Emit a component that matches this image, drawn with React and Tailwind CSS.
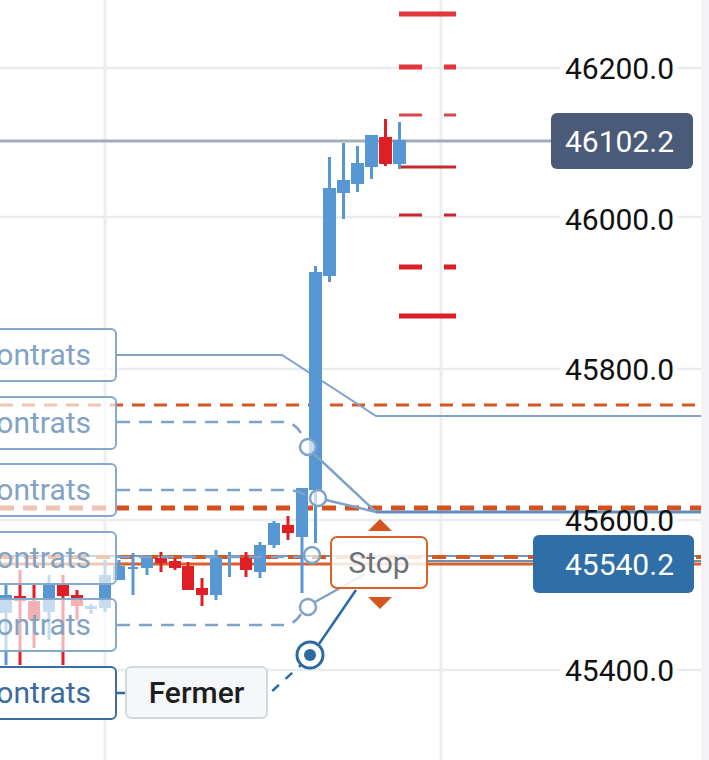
import React from "react";

const BLUE = "#5797d3";
const RED = "#de1f26";

// x, width, bodyTop, bodyBottom, wickTop, wickBottom, color
const candles = [
    [0, 12, 595, 613, 585, 665, "b"],
    [14, 12, 596, 601, 570, 665, "r"],
    [28, 12, 601, 620, 583, 648, "r"],
    [43, 12, 583, 612, 575, 640, "b"],
    [57, 12, 585, 596, 575, 665, "r"],
    [71, 12, 595, 606, 590, 620, "r"],
    [85, 12, 606, 609, 604, 614, "b"],
    [99, 12, 575, 608, 560, 612, "b"],
    [113, 12, 566, 580, 560, 580, "b"],
    [128, 10, 567, 569, 553, 595, "b"],
    [141, 12, 558, 568, 555, 575, "b"],
    [155, 12, 558, 563, 552, 572, "r"],
    [169, 12, 561, 568, 558, 570, "r"],
    [182, 12, 566, 590, 562, 590, "r"],
    [196, 12, 588, 595, 578, 606, "r"],
    [210, 12, 557, 595, 550, 600, "b"],
    [228, 3, 552, 577, 552, 577, "b"],
    [240, 12, 558, 570, 552, 577, "r"],
    [254, 12, 545, 572, 542, 578, "b"],
    [268, 12, 523, 545, 521, 548, "b"],
    [282, 12, 525, 533, 516, 540, "r"],
    [296, 12, 488, 537, 488, 593, "b"],
    [309, 13, 272, 490, 266, 543, "b"],
    [323, 13, 188, 276, 157, 282, "b"],
    [337, 13, 180, 193, 143, 219, "b"],
    [351, 13, 163, 184, 146, 192, "b"],
    [365, 13, 135, 167, 135, 179, "b"],
    [379, 13, 137, 164, 119, 166, "r"],
    [393, 13, 140, 164, 122, 169, "b"],
];

// y, thickness, solid, color
const redLevels = [
    [14, 5, true, "#e0363c"],
    [67, 5, false, "#e0363c"],
    [115, 3, false, "#d9474c"],
    [167, 3, true, "#c8262c"],
    [215, 3, false, "#c8262c"],
    [267, 5, false, "#dc1f26"],
    [316, 5, true, "#dc1f26"],
];

const gridY = [68, 217, 369, 520, 670];

const prices = ["46200.0", "46000.0", "45800.0", "45600.0", "45400.0"];

const Candle = ({ c }) => {
    const [x, w, bt, bb, wt, wb, col] = c;
    const fill = col === "r" ? RED : BLUE;
    return (
        <g fill={fill}>
            <rect x={x + w / 2 - 1.5} y={wt} width={3} height={wb - wt} />
            <rect x={x} y={bt} width={w} height={Math.max(bb - bt, 2)} />
        </g>
    );
};

const BaseLayer = () => (
    <svg className="absolute inset-0" width="701" height="760">
        {/* grid */}
        <line x1="105" y1="0" x2="105" y2="760" stroke="#eceef2" strokeWidth="3" />
        <line x1="441" y1="0" x2="441" y2="760" stroke="#eceef2" strokeWidth="3" />
        {gridY.map(y => (
            <g key={y} stroke="#eaecf0" strokeWidth="2.5">
                <line x1="0" y1={y} x2="560" y2={y} />
                <line x1="677" y1={y} x2="701" y2={y} />
            </g>
        ))}

        {/* last price line */}
        <line x1="0" y1="141" x2="552" y2="141" stroke="#a4acb9" strokeWidth="3" />

        {/* red levels */}
        {redLevels.map(([y, t, solid, color]) =>
            solid ? (
                <rect key={y} x="399" y={y - t / 2} width="57" height={t} fill={color} />
            ) : (
                <g key={y} fill={color}>
                    <rect x="399" y={y - t / 2} width="23" height={t} />
                    <rect x="444" y={y - t / 2} width="12" height={t} />
                </g>
            )
        )}

        {/* orange order lines */}
        <line x1="0" y1="405" x2="701" y2="405" stroke="#d4581f" strokeWidth="3" strokeDasharray="13 9" />
        <line x1="0" y1="508" x2="701" y2="508" stroke="#d4501c" strokeWidth="5" strokeDasharray="14 9" />
        <line x1="0" y1="556" x2="701" y2="556" stroke="#6e9bc8" strokeWidth="2" />
        <line x1="428" y1="561" x2="701" y2="561" stroke="#6b8fb5" strokeWidth="2" />
        <line x1="0" y1="557" x2="701" y2="557" stroke="#d4581f" strokeWidth="4" strokeDasharray="14 10" />
        <line x1="0" y1="564" x2="701" y2="564" stroke="#d9612c" strokeWidth="3" />

        {/* blue position lines */}
        <polyline points="117,355 282,355 376,416 701,416" fill="none" stroke="#7fa3c8" strokeWidth="2" />
        <line x1="376" y1="512" x2="701" y2="512" stroke="#5e8fc0" strokeWidth="3" />

        {candles.map((c, i) => (
            <Candle key={i} c={c} />
        ))}
    </svg>
);

const TopLayer = () => (
    <svg className="absolute inset-0" width="701" height="760">
        <g fill="none" stroke="#7fa3c8" strokeWidth="2.5" strokeDasharray="13 9">
            <path d="M117 422 H284 Q294 422 301 433" />
            <path d="M117 490 H286 Q296 490 306 495" />
            <path d="M117 557 H300" />
            <path d="M117 625 H284 Q294 625 301 614" />
        </g>
        <g fill="none" stroke="#7fa3c8" strokeWidth="2.5">
            <line x1="313" y1="453" x2="376" y2="512" />
            <line x1="326" y1="500" x2="376" y2="512" />
            <line x1="315" y1="602" x2="365" y2="574" />
        </g>
        <g fill="#ffffff" fillOpacity="0.65" stroke="#7fa3c8" strokeWidth="2.5">
            <circle cx="308" cy="447" r="8" />
            <circle cx="318" cy="498" r="8" />
            <circle cx="312" cy="555" r="8" />
            <circle cx="308" cy="607" r="8" />
        </g>

        {/* main position target */}
        <line x1="319" y1="644" x2="356" y2="590" stroke="#2b6aa3" strokeWidth="2.5" />
        <line x1="270" y1="693" x2="302" y2="664" stroke="#2b6aa3" strokeWidth="2.5" strokeDasharray="0 3 9 6" />
        <line x1="117" y1="693" x2="126" y2="693" stroke="#2b6aa3" strokeWidth="2.5" />
        <circle cx="310" cy="655" r="13" fill="#ffffff" stroke="#2b6aa3" strokeWidth="3" />
        <circle cx="310" cy="655" r="6" fill="#2b6aa3" />

        {/* stop arrows */}
        <polygon points="368,531 392,531 380,519" fill="#d5541f" />
        <polygon points="368,597 392,597 380,609" fill="#d5541f" />
    </svg>
);

const ContractBox = ({ active }) => (
    <div
        className={`w-[157px] h-[54px] shrink-0 rounded-[6px] border-2 flex items-center justify-end pr-[24px] text-[30px] leading-none ${
            active
                ? "border-[#3a6c9f] bg-white text-[#3a6b9c]"
                : "border-[#86a8ca] bg-white/65 text-[#82a3c5]"
        }`}
    >
        Contrats
    </div>
);

export default function App() {
    return (
        <div className="flex w-[709px] h-[760px] overflow-hidden bg-white font-['Roboto',_'Liberation_Sans',_sans-serif]">
            <div className="relative flex-1">
                <BaseLayer />
                <TopLayer />

                {/* position labels, stacked on the left edge */}
                <div className="absolute left-[-40px] top-[328px] flex flex-col gap-[13.6px]">
                    <ContractBox />
                    <ContractBox />
                    <ContractBox />
                    <ContractBox />
                    <ContractBox />
                    <div className="flex items-center gap-[8px]">
                        <ContractBox active />
                        <button className="w-[143px] h-[53px] rounded-[6px] border-2 border-[#d3d8dd] bg-[#f5f7f9] flex items-center justify-center text-[30px] font-medium text-[#1e1e1e]">
                            Fermer
                        </button>
                    </div>
                </div>

                <div className="absolute left-[330px] top-[536px] w-[98px] h-[53px] rounded-[7px] border-2 border-[#d9622b] bg-white/85 flex items-center justify-center text-[30px] text-[#6c7079]">
                    Stop
                </div>

                {/* price axis */}
                <div className="absolute right-[27px] top-[51px] flex flex-col items-end gap-[115.5px]">
                    {prices.map(p => (
                        <div key={p} className="text-[30px] leading-[35px] text-[#111]">
                            {p}
                        </div>
                    ))}
                </div>

                <div className="absolute left-[551px] top-[113px] w-[142px] h-[56px] rounded-[6px] bg-[#4a5a79] flex items-center justify-end pr-[19px] text-[30px] text-white">
                    46102.2
                </div>
                <div className="absolute left-[533px] top-[535px] w-[161px] h-[58px] rounded-[6px] bg-[#2f6ea7] flex items-center justify-end pr-[20px] text-[30px] text-white">
                    45540.2
                </div>
            </div>
            <div className="w-[8px] bg-[#f3f3f5]" />
        </div>
    );
}
